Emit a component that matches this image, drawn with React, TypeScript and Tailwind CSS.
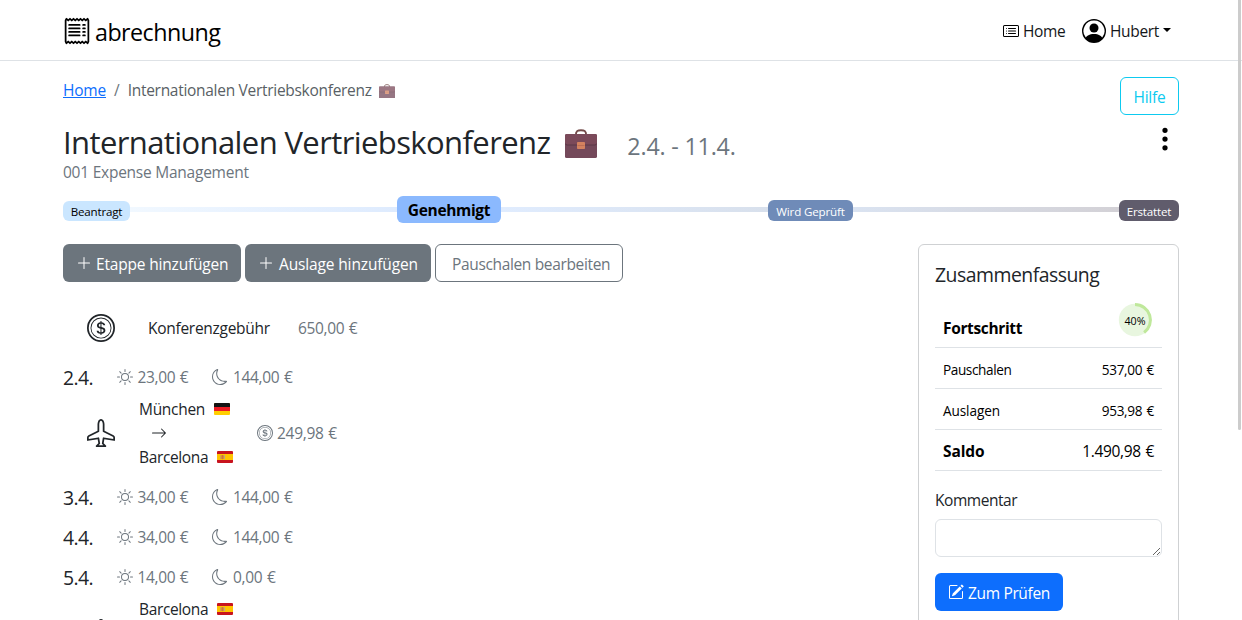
import React from "react";
import {
  BsAirplane,
  BsArrowRight,
  BsCardList,
  BsCoin,
  BsMoon,
  BsPencilSquare,
  BsPersonCircle,
  BsPlusLg,
  BsReceipt,
  BsSun,
  BsThreeDotsVertical,
} from "react-icons/bs";

function Briefcase({ className }: { className: string }) {
  return (
    <svg viewBox="0 0 32 29" className={className}>
      <path d="M10.8 6.500C10.800 1.500 13 1.300 16 1.300s5.200.2 5.200 5.200" fill="none" stroke="#744b4a" strokeWidth="1.900" />
      <rect x="0" y="5" width="32" height="24" rx="1.600" fill="#74495a" />
      <path d="M0 6.600A1.600 1.600 0 0 1 1.600 5h28.800A1.600 1.600 0 0 1 32 6.600V14a2 2 0 0 1-2 2H2a2 2 0 0 1-2-2z" fill="#7b4a5a" />
      <path d="M.2 14.500q.4 1.500 2 1.500h27.600q1.600 0 2-1.500" fill="none" stroke="#583545" strokeWidth=".9" />
      <rect x="12" y="13" width="8" height="7" rx=".8" fill="#d3825f" />
      <path d="M12.500 16.500h7" stroke="#b96a50" strokeWidth=".8" />
    </svg>
  );
}

function Flag({ country }: { country: "de" | "es" }) {
  return country === "de" ? (
    <svg viewBox="0 0 16 12" className="h-3 w-4">
      <rect width="16" height="12" rx="1" fill="#ffce00" />
      <path d="M0 4h16v4H0z" fill="#ed1c24" />
      <path d="M1 0h14a1 1 0 0 1 1 1v3H0V1a1 1 0 0 1 1-1z" fill="#141414" />
    </svg>
  ) : (
    <svg viewBox="0 0 16 12" className="h-3 w-4">
      <rect width="16" height="12" rx="1" fill="#c8141e" />
      <path d="M0 3h16v6H0z" fill="#ffc400" />
      <rect x="3.200" y="4.200" width="1" height="4" fill="#c89a5c" />
      <rect x="4.400" y="4" width="2.200" height="4.200" rx=".8" fill="#c8704a" />
      <rect x="7" y="4.200" width="1" height="4" fill="#b5a590" />
    </svg>
  );
}

function Day({ date, day, night }: { date: string; day: string; night: string }) {
  return (
    <div className="flex h-10 items-center">
      <span className="w-[54px] pt-px text-[19.4px] leading-6 tracking-[-0.6px]">{date}</span>
      <span className="flex w-[95px] items-center gap-[4.5px] text-[#6c757d]">
        <BsSun size={16} />
        <span className="tracking-[-0.36px] [word-spacing:0.9px]">{day}</span>
      </span>
      <span className="flex items-center gap-[5px] text-[#6c757d]">
        <BsMoon size={16} />
        <span className="tracking-[-0.33px] [word-spacing:0.9px]">{night}</span>
      </span>
    </div>
  );
}

function Stop({ name, country }: { name: string; country: "de" | "es" }) {
  return (
    <div className="flex h-6 items-center gap-[9px]">
      <span className={country === "de" ? "tracking-[-0.29px]" : "tracking-[-0.36px]"}>{name}</span>
      <Flag country={country} />
    </div>
  );
}

function SummaryRow({ label, value, strong }: { label: string; value: string; strong?: boolean }) {
  return (
    <div className="flex h-[41px] items-center justify-between border-b border-[#dee2e6] px-2 text-black">
      {strong ? (
        <>
          <span className="pt-[2px] font-bold tracking-[-0.1px]">{label}</span>
          <span className="pt-[2px] tracking-[-0.32px] [word-spacing:0.9px]">{value}</span>
        </>
      ) : (
        <>
          <span className={`pt-[3px] text-[13.6px] ${label === "Auslagen" ? "tracking-[-0.1px]" : "tracking-[-0.4px]"}`}>{label}</span>
          <span className="pt-[3px] text-[13.6px] tracking-[-0.28px] [word-spacing:0.9px]">{value}</span>
        </>
      )}
    </div>
  );
}

export default function App() {
  return (
    <div
      className="relative h-[620px] w-[1242px] overflow-hidden bg-white text-[15.5px] leading-6 whitespace-nowrap text-[#212529]"
      style={{ fontFamily: '"Open Sans", "Noto Sans", sans-serif' }}
    >
      <header className="flex h-[61px] items-center justify-between border-b border-[#dee2e6] pr-[71px] pl-[63px] text-black">
        <a className="flex items-center gap-[4px]">
          <BsReceipt size={28} className="mt-[2px]" />
          <span className="pt-[3px] text-[23.3px] leading-8 tracking-[-0.55px]">abrechnung</span>
        </a>
        <nav className="flex items-center">
          <a className="flex w-[79px] items-center gap-1">
            <BsCardList size={16} className="mt-px" />
            <span className="pt-px tracking-[-0.36px] text-[#141619]">Home</span>
          </a>
          <a className="flex items-center">
            <BsPersonCircle size={24} className="mt-[2px]" />
            <span className="ml-1 pt-px tracking-[-0.33px] text-[#141619]">Hubert</span>
            <svg viewBox="0 0 8 4" className="ml-1 h-1 w-2">
              <path d="M0 0h8L4 4z" fill="currentColor" />
            </svg>
          </a>
        </nav>
      </header>

      <main className="pr-[63px] pl-[63px]">
        <div className="flex h-[62px] items-start justify-between pt-4">
          <div className="flex h-6 items-center pt-[2px]">
            <a className="w-[43px] tracking-[-0.2px] text-[#0d6efd] underline">Home</a>
            <span className="ml-2 text-[#6c757d]">/</span>
            <span className="ml-[8px] tracking-[-0.29px] text-[#595f65]">Internationalen Vertriebskonferenz</span>
            <Briefcase className="mt-[2px] ml-[7px] h-[14.500px] w-4 opacity-75" />
          </div>
          <button className="flex h-[38px] w-[59px] items-center justify-center rounded-md border border-[#0dcaf0] pt-[2px] tracking-[-0.25px] text-[#0dcaf0]">
            Hilfe
          </button>
        </div>

        <div className="flex h-[37px] items-start justify-between">
          <div className="flex items-start">
            <h1 className="text-[31px] leading-[38px] tracking-[-0.6px]">Internationalen Vertriebskonferenz</h1>
            <Briefcase className="mt-[6px] ml-[15px] h-[29px] w-8" />
            <span className="mt-[4px] ml-[30px] text-[23.3px] leading-[38px] tracking-[-0.2px] text-[#6c757d]">2.4. - 11.4.</span>
          </div>
          <BsThreeDotsVertical size={28} className="mt-[2px] text-black" />
        </div>
        <div className="tracking-[-0.24px] text-[#6c757d]">001 Expense Management</div>

        <div className="mt-[9px] flex h-[32px] items-center text-[11.6px] leading-[14px]">
          <span className="mt-[3px] flex h-[20px] w-[67px] items-center justify-center rounded-md bg-[#cae6ff] pt-[3px] tracking-[-0.2px] text-black">Beantragt</span>
          <span className="h-[5px] w-[267px] bg-linear-to-r from-[#f1f8ff] to-[#deebfe]" />
          <span className="flex h-[27px] w-[104px] items-center justify-center rounded-md bg-[#8bb9fe] pt-[2px] text-[15.5px] font-bold tracking-[-0.33px] text-black">Genehmigt</span>
          <span className="h-[5px] w-[267px] bg-linear-to-r from-[#e0ecfe] to-[#d8e0ec]" />
          <span className="mt-[2px] flex h-[21px] w-[85px] items-center justify-center rounded-md bg-[#6f8bb8] pt-[4px] tracking-[-0.16px] text-white">Wird Geprüft</span>
          <span className="h-[5px] w-[266px] bg-linear-to-r from-[#dae3f1] to-[#d3d1d6]" />
          <span className="mt-[2px] flex h-[21px] w-[60px] items-center justify-center rounded-md bg-[#605c6c] pt-[4px] tracking-[-0.18px] text-white">Erstattet</span>
        </div>

        <div className="mt-[19px] flex items-start justify-between">
          <div>
            <div className="flex h-[38px] gap-1">
              <button className="flex w-[178px] items-center gap-1 rounded-md bg-[#6c757d] pl-[13px] text-white">
                <BsPlusLg size={16} />
                <span className="pt-[2px] tracking-[-0.18px]">Etappe hinzufügen</span>
              </button>
              <button className="flex w-[186px] items-center gap-[5px] rounded-md bg-[#6c757d] pl-[13px] text-white">
                <BsPlusLg size={16} />
                <span className="pt-[2px] tracking-[-0.14px]">Auslage hinzufügen</span>
              </button>
              <button className="flex w-[188px] items-center rounded-md border border-[#6c757d] pt-[2px] pl-[16px] tracking-[-0.35px] text-[#6c757d]">
                Pauschalen bearbeiten
              </button>
            </div>

            <div className="mt-[26px] mb-[9px] flex h-10 items-center pl-6">
              <BsCoin size={28} />
              <span className="ml-[33px] w-[150px] tracking-[-0.28px]">Konferenzgebühr</span>
              <span className="tracking-[-0.34px] text-[#6c757d] [word-spacing:0.9px]">650,00 €</span>
            </div>

            <Day date="2.4." day="23,00 €" night="144,00 €" />
            <div className="mb-2 flex items-center pl-6">
              <BsAirplane size={28} />
              <div className="ml-6 w-[118px]">
                <Stop name="München" country="de" />
                <div className="flex h-6 items-center pl-3">
                  <BsArrowRight size={16} />
                </div>
                <Stop name="Barcelona" country="es" />
              </div>
              <BsCoin size={16} className="text-[#6c757d]" />
              <span className="ml-1 tracking-[-0.3px] text-[#6c757d] [word-spacing:0.9px]">249,98 €</span>
            </div>
            <Day date="3.4." day="34,00 €" night="144,00 €" />
            <Day date="4.4." day="34,00 €" night="144,00 €" />
            <Day date="5.4." day="14,00 €" night="0,00 €" />
            <div className="flex items-center pl-6">
              <BsAirplane size={28} />
              <div className="ml-6 h-[72px] w-[118px]">
                <Stop name="Barcelona" country="es" />
              </div>
            </div>
          </div>

          <aside className="h-[400px] w-[261px] rounded-md border border-[#cfd1d3] px-4 pt-4">
            <h2 className="pt-[2px] text-[19.4px] leading-6 tracking-[-0.5px]">Zusammenfassung</h2>
            <div className="flex h-[61px] justify-between border-b border-[#dee2e6] pr-[9px] pl-2 text-black">
              <span className="pt-[29px] font-bold tracking-[-0.35px]">Fortschritt</span>
              <div className="mt-[14px] grid h-[36px] w-[36px] place-items-center">
                <svg viewBox="0 0 36 36" className="col-start-1 row-start-1 h-9 w-9">
                  <circle cx="18" cy="19" r="16.200" fill="#e8f6df" />
                  <path d="M18 3.500A15.500 15.500 0 0 1 27.100 31.500" fill="none" stroke="#bfe89b" strokeWidth="3" />
                </svg>
                <span className="col-start-1 row-start-1 pt-[5px] text-[10.700px] leading-none">40%</span>
              </div>
            </div>
            <SummaryRow label="Pauschalen" value="537,00 €" />
            <SummaryRow label="Auslagen" value="953,98 €" />
            <SummaryRow label="Saldo" value="1.490,98 €" strong />
            <label className="mt-[17px] block tracking-[-0.45px]">Kommentar</label>
            <textarea className="mt-[7px] block h-[38px] w-full resize-y rounded-md border border-[#dee2e6]" />
            <button className="mt-4 flex h-[38px] w-[128px] items-center gap-1 rounded-md bg-[#0d6efd] pl-[13px] text-white">
              <BsPencilSquare size={16} />
              <span className="pt-[2px] tracking-[-0.34px]">Zum Prüfen</span>
            </button>
          </aside>
        </div>
      </main>
      <div className="absolute top-0 left-[1238px] h-[430px] w-[3px] rounded-b-full bg-[#cccccc]" />
    </div>
  );
}
